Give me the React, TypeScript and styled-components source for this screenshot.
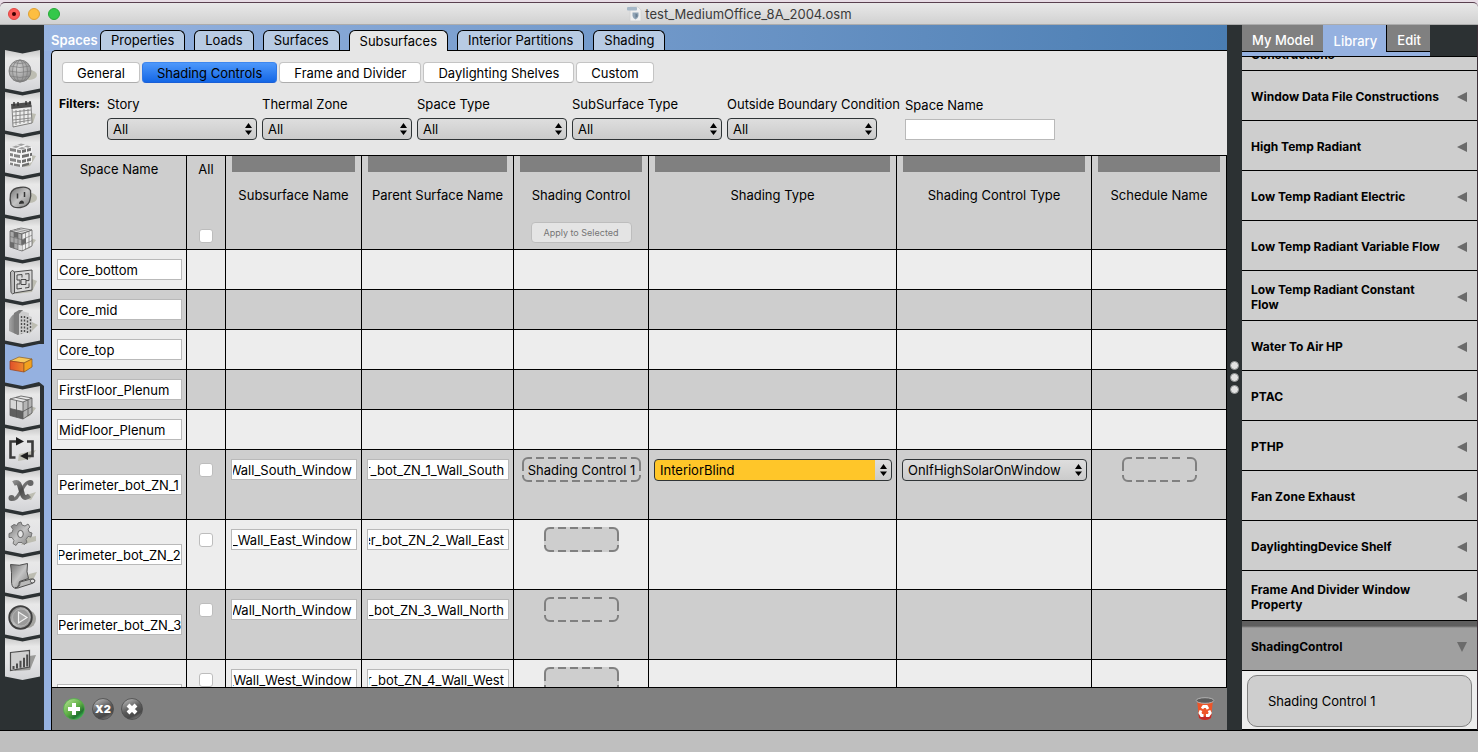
import React from "react";
import styled, { createGlobalStyle, css } from "styled-components";

const colors = {
  dark: "#2c3133",
  line: "#000000",
  blue: "#95b1e0",
  panel: "#e6e6e6",
  cell: "#cecece",
  cellLight: "#ededed",
  grey: "#808080",
};

const GlobalStyle = createGlobalStyle`
  *, *::before, *::after { box-sizing: border-box; }
  body { margin: 0; background: #e8dde6; }
  body, button, input, select {
    font-family: Inter, "Liberation Sans", sans-serif;
    font-size: 13px;
    line-height: 16px;
    color: #000;
  }
  button, input, select { margin: 0; }
`;

const Window = styled.div`
  display: flex;
  flex-direction: column;
  height: 100vh;
  padding-top: 2px;
`;

const TitleBar = styled.header`
  flex: none;
  display: grid;
  grid-template-columns: 1fr auto 1fr;
  align-items: center;
  height: 23px;
  padding: 0 8px;
  border-top: 1px solid #5a4150;
  border-bottom: 1px solid #acacac;
  border-radius: 5px 5px 0 0;
  background: linear-gradient(#e9e9e9, #d1d1d1);
`;

const Lights = styled.div`
  display: flex;
  gap: 8px;
`;

const Light = styled.button<{ $fill: string; $rim: string }>`
  display: grid;
  place-items: center;
  width: 12px;
  height: 12px;
  padding: 0;
  border: 1px solid ${(p) => p.$rim};
  border-radius: 50%;
  background: ${(p) => p.$fill};
`;

const EditedDot = styled.span`
  width: 4px;
  height: 4px;
  border-radius: 50%;
  background: #3d0000;
`;

const Title = styled.h1`
  display: flex;
  align-items: center;
  gap: 3px;
  margin: 0;
  font-size: 13px;
  font-weight: 400;
  color: #3a3a3a;
`;

const Workspace = styled.div`
  flex: 1;
  display: flex;
  min-height: 0;
  border-right: 1px solid #3c3038;
  background: ${colors.dark};
`;

const StatusBar = styled.footer`
  flex: none;
  height: 22px;
  border-top: 1px solid ${colors.line};
  background: #bfbfbf;
`;

const Rail = styled.nav`
  flex: none;
  display: flex;
  flex-direction: column;
  width: 44px;
  padding: 25px 0 0 5px;
`;

const RailButton = styled.button`
  flex: none;
  height: 42px;
  padding: 0;
  border: 0;
  background: none;
  text-align: left;
  svg { display: block; }
`;

const Main = styled.main`
  flex: 1;
  display: flex;
  flex-direction: column;
  min-width: 0;
  padding-left: 7px;
  background: linear-gradient(90deg, #98b4e1, #4a7db2);
  background-color: ${colors.blue};
  background-size: 100% 26px;
  background-repeat: no-repeat;
`;

const TabBar = styled.div`
  flex: none;
  display: flex;
  align-items: flex-end;
  gap: 9px;
  height: 25px;
`;

const Section = styled.h2`
  width: 40px;
  margin: 0;
  font-size: 13px;
  line-height: 20px;
  font-weight: 600;
  color: #fff;
`;

const Tab = styled.button<{ $active?: boolean }>`
  height: 20px;
  padding: 0 10px;
  border: 1px solid ${colors.line};
  border-bottom: 0;
  border-radius: 6px 6px 0 0;
  background: #b8cbe3;
  line-height: 19px;
  ${(p) =>
    p.$active &&
    css`
      z-index: 1;
      height: 21px;
      margin-bottom: -1px;
      background: ${colors.panel};
      line-height: 21px;
    `}
`;

const Panel = styled.section`
  flex: 1;
  display: flex;
  flex-direction: column;
  min-height: 0;
  border-top: 1px solid ${colors.line};
  border-left: 1px solid ${colors.line};
  border-radius: 5px 0 0 0;
  background: ${colors.panel};
`;

const SubTabs = styled.div`
  display: flex;
  gap: 2px;
  padding: 11px 10px 0;
`;

const SubTab = styled.button<{ $active?: boolean }>`
  height: 21px;
  padding: 0 14px;
  border: 1px solid #c4c4c4;
  border-bottom-color: #adadad;
  border-radius: 4px;
  background: #fff;
  line-height: 18px;
  ${(p) =>
    p.$active &&
    css`
      border-color: #3d87ef #2f78e6 #1a5fd6;
      background: linear-gradient(#4d98fb, #1467e6);
    `}
`;

const Filters = styled.div`
  display: flex;
  align-items: flex-end;
  padding: 13px 7px 15px;
`;

const FiltersTitle = styled.strong`
  align-self: flex-start;
  width: 48px;
  font-size: 12px;
  font-weight: 700;
`;

const FilterList = styled.div`
  display: flex;
  align-items: flex-end;
  gap: 5px;
`;

const Filter = styled.div`
  display: flex;
  flex-direction: column;
  gap: 6px;
  min-width: 150px;
`;

const FilterLabel = styled.label`
  white-space: nowrap;
`;

const SelectFrame = styled.div<{ $wide?: boolean }>`
  position: relative;
  width: ${(p) => (p.$wide ? "100%" : "150px")};
  svg {
    position: absolute;
    top: 5px;
    right: 5px;
    pointer-events: none;
  }
`;

const SelectBox = styled.select<{ $marked?: boolean }>`
  display: block;
  appearance: none;
  width: 100%;
  height: 22px;
  padding: 0 20px 0 5px;
  border: 1px solid #2f3436;
  border-radius: 4px;
  background: ${(p) =>
    p.$marked
      ? "linear-gradient(90deg, #ffc629 calc(100% - 16px), transparent calc(100% - 16px)), linear-gradient(#dedede, #cbcbcb)"
      : "linear-gradient(#dedede, #cbcbcb)"};
`;

const TextBox = styled.input<{ $tight?: boolean }>`
  display: block;
  width: 100%;
  height: 21px;
  padding: ${(p) => (p.$tight ? "0 0 0 1px" : "0 4px 0 1px")};
  border: 1px solid #b9b9b9;
  border-radius: 0;
  background: #fff;
`;

const FilterText = styled(TextBox)`
  width: 150px;
`;

const TableArea = styled.div`
  flex: 1;
  min-height: 0;
  overflow: hidden;
  border-top: 1px solid ${colors.line};
  border-bottom: 1px solid ${colors.line};
`;

const Table = styled.table`
  width: 100%;
  table-layout: fixed;
  border-collapse: separate;
  border-spacing: 0;
`;

const Column = styled.col<{ $width?: number }>`
  width: ${(p) => (p.$width ? `${p.$width}px` : "auto")};
`;

const HeadCell = styled.th`
  height: 94px;
  padding: 0;
  border-right: 1px solid ${colors.line};
  border-bottom: 1px solid ${colors.line};
  background: ${colors.cell};
  font-weight: 400;
`;

const HeadBody = styled.div<{ $plain?: boolean }>`
  display: flex;
  flex-direction: column;
  align-items: center;
  height: 93px;
  padding: ${(p) => (p.$plain ? "5px 0 6px" : "0 6px 6px")};
`;

const Grip = styled.div`
  width: 100%;
  height: 16px;
  margin-bottom: 15px;
  background: ${colors.grey};
`;

const ApplyButton = styled.button`
  width: 101px;
  height: 21px;
  margin-top: auto;
  padding: 0;
  border: 1px solid #bdbdbd;
  border-radius: 4px;
  background: #e4e4e4;
  font-size: 9px;
  line-height: 18px;
  color: #757575;
`;

const Check = styled.input`
  display: block;
  appearance: none;
  width: 14px;
  height: 14px;
  border: 1px solid #bdbdbd;
  border-radius: 3px;
  background: #fff;
`;

const HeadCheck = styled(Check)`
  margin-top: auto;
`;

const RowCheck = styled(Check)`
  margin: 4px 0 0 7px;
`;

const Row = styled.tr<{ $height: number; $light: boolean }>`
  height: ${(p) => p.$height}px;
  background: ${(p) => (p.$light ? colors.cellLight : colors.cell)};
`;

const Cell = styled.td<{ $middle?: boolean }>`
  padding: ${(p) => (p.$middle ? "0 4px 0 5px" : "9px 4px 0 5px")};
  border-right: 1px solid ${colors.line};
  border-bottom: 1px solid ${colors.line};
  vertical-align: ${(p) => (p.$middle ? "middle" : "top")};
`;

const DropCell = styled(Cell)`
  padding-top: 7px;
`;

const DropZone = styled.div<{ $width: number }>`
  position: relative;
  display: grid;
  place-items: center;
  width: ${(p) => p.$width}px;
  height: 25px;
  margin: 0 auto;
  border-radius: 5px;
  background: ${colors.cell};
  white-space: nowrap;
  svg {
    position: absolute;
    inset: 0;
  }
`;

const ToolBar = styled.div`
  flex: none;
  display: flex;
  align-items: center;
  gap: 5px;
  height: 42px;
  padding: 0 10px;
  background: ${colors.grey};
`;

const IconButton = styled.button<{ $last?: boolean }>`
  width: 24px;
  height: 24px;
  padding: 0;
  margin-left: ${(p) => (p.$last ? "auto" : "0")};
  border: 0;
  background: none;
  svg { display: block; }
`;

const Splitter = styled.div`
  flex: none;
  display: flex;
  flex-direction: column;
  align-items: center;
  justify-content: center;
  gap: 3px;
  width: 15px;
`;

const SplitterDot = styled.span`
  width: 9px;
  height: 9px;
  border: 1px solid #8e9192;
  border-radius: 50%;
  background: #e2e2e2;
`;

const Side = styled.aside`
  flex: none;
  display: flex;
  flex-direction: column;
  width: 235px;
`;

const SideTabs = styled.div`
  flex: none;
  display: flex;
  align-self: flex-start;
  height: 31px;
  border-bottom: 4px solid ${colors.blue};
`;

const SideTab = styled.button<{ $active?: boolean }>`
  height: 27px;
  padding: 0 9px 0 10px;
  border: solid ${colors.line};
  border-width: 0 0 1px 0;
  background: ${colors.grey};
  font-weight: 500;
  line-height: 30px;
  color: #fff;
  & + & { border-left-width: 1px; }
  ${(p) =>
    p.$active &&
    css`
      border-color: ${colors.blue};
      background: ${colors.blue};
      line-height: 32px;
    `}
`;

const Library = styled.div`
  flex: 1;
  display: flex;
  flex-direction: column;
  justify-content: flex-end;
  min-height: 0;
  overflow: hidden;
  border-top: 1px solid ${colors.line};
  border-bottom: 1px solid ${colors.line};
`;

const LibraryItem = styled.button<{ $open?: boolean }>`
  flex: none;
  display: flex;
  align-items: center;
  justify-content: space-between;
  height: 50px;
  padding: 2px 10px 0 9px;
  border: 0;
  border-bottom: 1px solid ${colors.line};
  background: ${(p) =>
    p.$open
      ? "linear-gradient(#5f5f5f 5px, #828282 6px, #a0a0a0 7px, #a0a0a0)"
      : colors.cell};
  font-size: 12px;
  line-height: 15px;
  font-weight: 700;
  text-align: left;
  white-space: pre;
`;

const LibraryBody = styled.div`
  flex: none;
  padding: 4px 5px 2px;
  background: #ededed;
`;

const LibraryCard = styled.div`
  height: 52px;
  padding-left: 20px;
  border: 1px solid ${colors.grey};
  border-radius: 10px;
  background: ${colors.cell};
  line-height: 50px;
`;

const HiddenDefs = styled.svg`
  position: absolute;
`;

const shadow = "#bdbdb2";

function IconDefs() {
  return (
    <HiddenDefs width="0" height="0" aria-hidden="true">
      <defs>
        <linearGradient id="tile" x1="0" y1="0" x2="0" y2="1">
          <stop offset="0" stopColor="#c9c9c9" />
          <stop offset="0.2" stopColor="#e8e8e8" />
          <stop offset="0.6" stopColor="#e2e2e4" />
          <stop offset="1" stopColor="#d2d3d6" />
        </linearGradient>
        <linearGradient id="steel" x1="0" y1="0" x2="1" y2="1">
          <stop offset="0" stopColor="#6f6f6f" />
          <stop offset="0.5" stopColor="#c4c4c4" />
          <stop offset="1" stopColor="#7d7d7d" />
        </linearGradient>
        <linearGradient id="steelDark" x1="0" y1="0" x2="1" y2="1">
          <stop offset="0" stopColor="#8a8a8a" />
          <stop offset="0.5" stopColor="#4a4a4a" />
          <stop offset="1" stopColor="#777" />
        </linearGradient>
        <linearGradient id="wall" x1="0" y1="0" x2="1" y2="0">
          <stop offset="0" stopColor="#a5a5a5" />
          <stop offset="1" stopColor="#6d6d6d" />
        </linearGradient>
        <radialGradient id="ball" cx="0.4" cy="0.35" r="0.7">
          <stop offset="0" stopColor="#cfcfcf" />
          <stop offset="1" stopColor="#8e8e8e" />
        </radialGradient>
        <linearGradient id="green" x1="0.1" y1="0" x2="0.9" y2="1">
          <stop offset="0" stopColor="#b5e393" />
          <stop offset="0.5" stopColor="#5fae45" />
          <stop offset="0.75" stopColor="#23742f" />
          <stop offset="1" stopColor="#44dd70" />
        </linearGradient>
        <linearGradient id="grey" x1="0.2" y1="0" x2="0.7" y2="1">
          <stop offset="0" stopColor="#b9b9b9" />
          <stop offset="0.5" stopColor="#5c5c5c" />
          <stop offset="0.8" stopColor="#484848" />
          <stop offset="1" stopColor="#808080" />
        </linearGradient>
        <linearGradient id="orangeFace" x1="0" y1="0" x2="1" y2="0">
          <stop offset="0" stopColor="#e0502a" />
          <stop offset="1" stopColor="#ef8a2c" />
        </linearGradient>
      </defs>
    </HiddenDefs>
  );
}

const glyphs: { name: string; art: React.ReactNode }[] = [
  {
    name: "Site",
    art: (
      <g>
        <ellipse cx="24" cy="25" rx="8" ry="5" fill={shadow} />
        <circle cx="15" cy="21" r="11" fill="url(#ball)" />
        <g fill="none" stroke="#7d7d7d" strokeWidth="0.7">
          <circle cx="15" cy="21" r="11" stroke="#6d6d6d" />
          <ellipse cx="15" cy="21" rx="3.500" ry="11" />
          <ellipse cx="15" cy="21" rx="7.500" ry="11" />
          <path d="M4 21q11 3 22 0M5 16q10 3 20 0M8 12.500q7 2 14 0M5 26q10 3 20 0M8 30q7 1.500 14 0" />
        </g>
      </g>
    ),
  },
  {
    name: "Schedules",
    art: (
      <g>
        <path d="M26 21l5 1-3 9-20 4z" fill={shadow} />
        <path d="M7 15l19-2 1 18-19 4z" fill="#ececec" stroke="#666" strokeWidth="0.8" />
        <path d="M6 12l20-2 .5 5-20 2z" fill="#4f4f4f" />
        <path d="M9 10v4M13 10v4M21 9v4M25 9v3" stroke="#333" strokeWidth="1.400" />
        <path d="M8 20l18-2M8 24l18-2M8 28l18-2M8 31l18-3M11 18v15M15 18v14M19 17v14M23 17v14" stroke="#858585" strokeWidth="0.9" fill="none" />
      </g>
    ),
  },
  {
    name: "Constructions",
    art: (
      <g>
        <path d="M26 21l5 1-6 10-6 1z" fill={shadow} />
        <path d="M5 14l10-4 12 3v15l-11 5-12-3z" fill="#f4f4f4" />
        <g fill="#848484">
          <path d="M5 14l6 1v3l-6-1zM12 15.500l4 .7v3l-4-.7zM5 19l3 .5v3L5 22zM9 20l6 1v3l-6-1zM5 24l6 1v3l-6-1zM12 25.500l4 .7v3l-4-.7zM5 28.500l3 .5v2.500l-3-.7zM9 29.500l6 1v2.500l-6-1.200z" />
          <path d="M17 16l4-1v3l-4 1zM22 14.700l4-1v3l-4 1zM17 21l7-1.600v3L17 24zM25 19.300l2-.5v3l-2 .5zM17 26l4-1v3l-4 1zM22 24.700l4-1v3l-4 1zM17 30.500l7-2v2.600l-7 1.900z" fill="#6d6d6d" />
        </g>
        <path d="M7 13l4-1.500 4 1-4 1.500zM12 11l4-1.500 4 1-4 1.400zM13 14.500l4-1.500 4 1-4 1.500zM19 12.500l3-1 4 1-3 1.200z" fill="#a0a0a0" />
      </g>
    ),
  },
  {
    name: "Loads",
    art: (
      <g>
        <ellipse cx="25" cy="22" rx="7" ry="5" fill={shadow} />
        <path d="M5.500 18q2-6 9-6.500 8-1.500 11 3 1 6-1 11-2 5-9 6-7 1-9.500-3-1.500-5-.5-10.500z" fill="url(#steel)" stroke="#454545" strokeWidth="1.300" />
        <path d="M12.500 17.500v5M19.500 16v5" stroke="#333" strokeWidth="1.500" />
        <path d="M14 28q0-3 2.500-3.500 2.500 0 2.500 3z" fill="#333" />
      </g>
    ),
  },
  {
    name: "Space Types",
    art: (
      <g>
        <path d="M26 20l5 2-6 8-8 3z" fill={shadow} />
        <path d="M5 13l11-3 11 2-10 4z" fill="#e0e0e0" stroke="#555" strokeWidth="0.7" />
        <path d="M5 13l12 3v17L5 29z" fill="#a9a9a9" stroke="#555" strokeWidth="0.7" />
        <path d="M17 16l10-4v16l-10 5z" fill="#ededed" stroke="#555" strokeWidth="0.7" />
        <path d="M9 14v5l4 1v-5zM5 24l4 1v5l-4-1z" fill="#6a6a6a" />
        <path d="M17 22l4-2v5l-4 2z" fill="#6a6a6a" />
        <path d="M13 26l4 1v5.500l-4-1z" fill="#dcdcdc" />
        <path d="M9 14v16.500M13 15v16.500M5 18.500l12 3.200 10-4.500M5 24l12 3.200 10-4.500M20.500 14.500v16.700M24 13v16.500M9 12l11 2.500M12 11l11.500 2.300" fill="none" stroke="#666" strokeWidth="0.6" />
      </g>
    ),
  },
  {
    name: "Geometry",
    art: (
      <g>
        <path d="M27 19l5 2-5 11-17 2z" fill={shadow} />
        <path d="M9 12l18-2v20l-18 3z" fill="#d8d8d8" stroke="#4d4d4d" strokeWidth="1" />
        <path d="M5.500 12q2-3 4 0v21q-2 2-3.500-.5z" fill="#bcbcbc" stroke="#4d4d4d" strokeWidth="1" />
        <path d="M12 15l5-.5v3M20 14l4-.4v7h-3M12 15v5h3v4h-3v5l5-.7M20 28l4-.6v-4M16 19.500h5v5h-5z" fill="none" stroke="#4a4a4a" strokeWidth="1" />
      </g>
    ),
  },
  {
    name: "Facility",
    art: (
      <g>
        <path d="M27 20l6 3-9 9z" fill={shadow} />
        <path d="M4 18q3-6 9-8v23l-9-4z" fill="url(#wall)" />
        <path d="M9 11l5-3h4l-4 5v20l-5-2z" fill="#7d7d7d" />
        <path d="M14 12l3-3 7 2v3l3 1v14l-13 4z" fill="#cdcdcd" />
        <path d="M16.500 14v18M19.500 14v17M22.500 15v16M25.500 17v13" stroke="#4d4d4d" strokeWidth="1.400" strokeDasharray="2 1.500" />
      </g>
    ),
  },
  {
    name: "Spaces",
    art: (
      <g>
        <path d="M26 19l2 3-8 6z" fill="#7f97bd" />
        <path d="M5 17l9-4 13 2-8 4z" fill="#f8c95a" stroke="#8a5a22" strokeWidth="0.7" />
        <path d="M5 17l14 2v9L5 25.500z" fill="url(#orangeFace)" stroke="#9a4018" strokeWidth="0.7" />
        <path d="M19 19l8-4v8l-8 5z" fill="#f2a11e" stroke="#8a5a22" strokeWidth="0.7" />
      </g>
    ),
  },
  {
    name: "Thermal Zones",
    art: (
      <g>
        <path d="M26 20l5 2-6 8-8 3z" fill={shadow} />
        <path d="M5 13l11-3 11 2-9 4z" fill="#e8e8e8" />
        <path d="M5 13l13 3v17L5 29.500z" fill="#d6d6d6" />
        <path d="M18 16l9-4v15l-9 6z" fill="#b5b5b5" />
        <path d="M5 22.500l13 3V33L5 29.500z" fill="#5f5f5f" />
        <path d="M5 13l11-3 11 2v15l-9 6-13-3.500zM5 13l13 3v17M18 16l9-4M5 22.500l13 3 9-5M11.500 14.500v16.700M11 11.500l12 2.500v16" fill="none" stroke="#555" strokeWidth="0.8" />
      </g>
    ),
  },
  {
    name: "HVAC Systems",
    art: (
      <g>
        <path d="M14 26l17-4-6 9-12 2z" fill={shadow} />
        <path d="M13 13.500H5.500v16h5M22 13.500h5.500v14.500h-5" fill="none" stroke="#3c3c3c" strokeWidth="2.600" />
        <path d="M11 9l8 4.500-8 4zM23 24v8l-8-4z" fill="#1e1e1e" />
      </g>
    ),
  },
  {
    name: "Output Variables",
    art: (
      <g>
        <path d="M15 27l16-5-5 8z" fill={shadow} />
        <path d="M26 12.500q-4-1.500-7.500 4.500l-5 8q-3.500 6-7.500 3.500" fill="none" stroke="#707070" strokeWidth="3.200" />
        <path d="M8.500 13.500q5-3 6.500 3l2.500 8q2 5.500 7 1" fill="none" stroke="url(#steelDark)" strokeWidth="5" />
        <circle cx="25.500" cy="13" r="3" fill="#666" />
        <circle cx="6.500" cy="28" r="3" fill="#666" />
      </g>
    ),
  },
  {
    name: "Simulation Settings",
    art: (
      <g>
        <path d="M20 26l11-2v5l-15 4z" fill={shadow} />
        <path d="M13 11l3-1 1 3 3 1 3-2 2 3-2 2 1 3 3 1-1 4-3-.5-2 3 1 3-3 2-2-2-4 0-2 3-3-2 1-3-2-3-3 0 0-4 3-1 1-3-2-3 3-2 3 1z" fill="url(#steel)" stroke="#6a6a6a" strokeWidth="0.9" />
        <ellipse cx="15.500" cy="22" rx="2.800" ry="3.600" fill="#e6e6e6" stroke="#555" strokeWidth="0.9" />
      </g>
    ),
  },
  {
    name: "Measures",
    art: (
      <g>
        <path d="M24 20l8-2-5 10-9 3z" fill={shadow} />
        <path d="M5.500 10.500q9 2 17-1-1.500 9 1 15l-9 3q-1 7-5 6.500-3-1-3-7 .5-9-1-16.500z" fill="url(#steel)" stroke="#4d4d4d" strokeWidth="1" />
        <path d="M10 34q5 0 5-6l11-3q3-.5 4 1.500 0 2-3 3l-11 3.500q-3 1.500-6 1z" fill="#b9b9b9" stroke="#4d4d4d" strokeWidth="1" />
        <ellipse cx="27.500" cy="27" rx="2.300" ry="1.800" fill="#e0e0e0" stroke="#4d4d4d" strokeWidth="0.8" />
      </g>
    ),
  },
  {
    name: "Run Simulation",
    art: (
      <g>
        <ellipse cx="23" cy="23" rx="8" ry="9" fill="#a4a4a0" />
        <circle cx="15.500" cy="21.500" r="11.300" fill="url(#steel)" stroke="#3f3f3f" strokeWidth="1.800" />
        <circle cx="16" cy="21.500" r="8.500" fill="#9a9a9a" stroke="#b8b8b8" strokeWidth="0.8" />
        <path d="M13.500 16v11l8.500-5.500z" fill="#aaa" stroke="#f2f2f2" strokeWidth="1.200" />
      </g>
    ),
  },
  {
    name: "Results Summary",
    art: (
      <g>
        <path d="M24 18l7-1-6 15-16 1z" fill="#9a9a98" />
        <path d="M5.500 14.500l19-2v16.500l-19 3.500z" fill="#cfcfcf" stroke="#4b4b4b" strokeWidth="1.200" />
        <path d="M8.500 31v-3M12 30.500v-5M15.500 29.800v-7M19 29.200v-9.500M22.200 28.600v-12" stroke="#4b4b4b" strokeWidth="2" />
      </g>
    ),
  },
];

function RailIcon({ art, active }: { art: React.ReactNode; active: boolean }) {
  return (
    <svg width="39" height="42" viewBox="0 0 39 42" aria-hidden="true">
      {active ? (
        <path d="M0 0l17.500 3.500L34 0h5v42l-5-4-16.500 4L0 38.500z" fill={colors.blue} />
      ) : (
        <path d="M0 0l17.500 3.500L35 0v38.500L17.500 42 0 38.500z" fill="url(#tile)" />
      )}
      {art}
    </svg>
  );
}

function Arrows() {
  return (
    <svg width="7" height="12" viewBox="0 0 7 12" aria-hidden="true">
      <path d="M3.500 0L7 5H0zM3.500 12L7 7.500H0z" fill="#000" />
    </svg>
  );
}

function Dropdown({ id, label, value, marked, wide }: {
  id: string; label?: string; value: string; marked?: boolean; wide?: boolean;
}) {
  return (
    <SelectFrame $wide={wide}>
      <SelectBox id={id} aria-label={label} $marked={marked} defaultValue={value}>
        <option>{value}</option>
      </SelectBox>
      <Arrows />
    </SelectFrame>
  );
}

/* Long names keep their end in view, as after typing. */
function NameBox({ label, value, tight }: { label: string; value: string; tight?: boolean }) {
  const toEnd = (el: HTMLInputElement | null) => {
    if (el) el.scrollLeft = el.scrollWidth;
  };
  return <TextBox ref={toEnd} $tight={tight} aria-label={label} defaultValue={value} />;
}

function Drop({ text, width }: { text?: string; width: number }) {
  const w = width - 1;
  return (
    <DropZone $width={width}>
      <svg width={width} height="25" viewBox={`0 0 ${width} 25`} aria-hidden="true">
        <path
          d={`M1 14V6a5 5 0 0 1 5-5h4M${w} 14V6a5 5 0 0 0-5-5h-4M1 18v1a5 5 0 0 0 5 5h4M${w} 18v1a5 5 0 0 1-5 5h-4`}
          fill="none"
          stroke="#808080"
          strokeWidth="2"
        />
        <path
          d={`M14 1H${w - 13}M14 24H${w - 13}`}
          fill="none"
          stroke="#808080"
          strokeWidth="2"
          strokeDasharray="8 4"
        />
      </svg>
      {text}
    </DropZone>
  );
}

const tabs = ["Properties", "Loads", "Surfaces", "Subsurfaces", "Interior Partitions", "Shading"];
const subTabs = ["General", "Shading Controls", "Frame and Divider", "Daylighting Shelves", "Custom"];
const filters = ["Story", "Thermal Zone", "Space Type", "SubSurface Type", "Outside Boundary Condition"];
const columns: { title: string; width?: number }[] = [
  { title: "Subsurface Name", width: 136 },
  { title: "Parent Surface Name", width: 152 },
  { title: "Shading Control", width: 135 },
  { title: "Shading Type" },
  { title: "Shading Control Type", width: 195 },
  { title: "Schedule Name", width: 135 },
];
const plainSpaces = ["Core_bottom", "Core_mid", "Core_top", "FirstFloor_Plenum", "MidFloor_Plenum"];
const perimeter = [
  { zone: 1, side: "South" },
  { zone: 2, side: "East" },
  { zone: 3, side: "North" },
  { zone: 4, side: "West" },
];
const library = [
  "\nConstructions",
  "Window Data File Constructions",
  "High Temp Radiant",
  "Low Temp Radiant Electric",
  "Low Temp Radiant Variable Flow",
  "Low Temp Radiant Constant\nFlow",
  "Water To Air HP",
  "PTAC",
  "PTHP",
  "Fan Zone Exhaust",
  "DaylightingDevice Shelf",
  "Frame And Divider Window\nProperty",
];

function SubsurfaceTable() {
  return (
    <Table>
      <colgroup>
        <Column $width={135} />
        <Column $width={39} />
        {columns.map((c) => (
          <Column key={c.title} $width={c.width} />
        ))}
      </colgroup>
      <thead>
        <tr>
          <HeadCell>
            <HeadBody $plain>Space Name</HeadBody>
          </HeadCell>
          <HeadCell>
            <HeadBody $plain>
              <label htmlFor="all">All</label>
              <HeadCheck id="all" type="checkbox" />
            </HeadBody>
          </HeadCell>
          {columns.map((c) => (
            <HeadCell key={c.title}>
              <HeadBody>
                <Grip />
                {c.title}
                {c.title === "Shading Control" && <ApplyButton>Apply to Selected</ApplyButton>}
              </HeadBody>
            </HeadCell>
          ))}
        </tr>
      </thead>
      <tbody>
        {plainSpaces.map((name, i) => (
          <Row key={name} $height={40} $light={i % 2 === 0}>
            <Cell $middle>
              <NameBox label="Space name" value={name} tight />
            </Cell>
            <Cell />
            {columns.map((c) => (
              <Cell key={c.title} />
            ))}
          </Row>
        ))}
        {perimeter.map(({ zone, side }, i) => {
          const space = `Perimeter_bot_ZN_${zone}`;
          return (
            <Row key={space} $height={70} $light={i % 2 === 1}>
              <Cell $middle>
                <NameBox label="Space name" value={space} tight />
              </Cell>
              <Cell>
                <RowCheck type="checkbox" aria-label={`Select ${space}`} />
              </Cell>
              <Cell>
                <NameBox label="Subsurface name" value={`${space}_Wall_${side}_Window`} />
              </Cell>
              <Cell>
                <NameBox label="Parent surface name" value={`${space}_Wall_${side}`} />
              </Cell>
              <DropCell>
                {zone === 1 ? <Drop width={119} text="Shading Control 1" /> : <Drop width={75} />}
              </DropCell>
              <Cell>
                {zone === 1 && (
                  <Dropdown id="shading-type" label="Shading type" value="InteriorBlind" marked wide />
                )}
              </Cell>
              <Cell>
                {zone === 1 && (
                  <Dropdown id="control-type" label="Shading control type" value="OnIfHighSolarOnWindow" wide />
                )}
              </Cell>
              <DropCell>{zone === 1 && <Drop width={75} />}</DropCell>
            </Row>
          );
        })}
      </tbody>
    </Table>
  );
}

function RoundIcon({ kind }: { kind: "add" | "copy" | "remove" }) {
  return (
    <svg width="24" height="24" viewBox="0 0 24 24" aria-hidden="true">
      <circle cx="12" cy="12" r="10.500" fill={kind === "add" ? "url(#green)" : "url(#grey)"} stroke={kind === "add" ? "#4fae4a" : "#4a4a4a"} strokeWidth="0.8" />
      {kind === "add" && <path d="M12 6v12M6 12h12" stroke="#fff" strokeWidth="4" strokeLinejoin="round" />}
      {kind === "copy" && (
        <text x="12" y="16" textAnchor="middle" fontSize="11" fontWeight="900" fill="#fff">X2</text>
      )}
      {kind === "remove" && <path d="M8 8l8 8M16 8l-8 8" stroke="#fff" strokeWidth="4" />}
    </svg>
  );
}

function Trash() {
  return (
    <svg width="24" height="24" viewBox="0 0 24 24" aria-hidden="true">
      <path d="M4 3l2 18q6 4 12 0l2-18z" fill="#ee5528" />
      <path d="M6 21q6 4 12 0l.5-4q-6 5-13 0z" fill="#c42a26" />
      <ellipse cx="12" cy="3.500" rx="8.800" ry="2.800" fill="#5b5b5b" stroke="#b2b2b2" strokeWidth="1" />
      <g fill="none" stroke="#fff" strokeWidth="2.800">
        <path d="M9 11.500l1.500-2h3l1.500 2.500" />
        <path d="M8 13.500l-1 2.500 1.500 2.500h2" />
        <path d="M16 13.500l1.200 2.500-1.700 2.500h-2.500" />
      </g>
    </svg>
  );
}

function DocIcon() {
  return (
    <svg width="16" height="16" viewBox="0 0 16 16" aria-hidden="true">
      <path d="M4 1h8l3 3v11H4z" fill="#f0f0f0" stroke="#d2d2d2" strokeWidth="0.800" />
      <rect x="1" y="1" width="10" height="3.500" rx="1" fill="#a6b8c8" />
      <path d="M6.500 6.500h6v3.500q-.5 2.500-3 3.500-2.500-1-3-3.500z" fill="#8fa3b5" />
      <path d="M9.500 7.500l2 1v2l-2 1.500z" fill="#6b7f92" />
    </svg>
  );
}

export default function App() {
  return (
    <Window>
      <GlobalStyle />
      <IconDefs />
      <TitleBar>
        <Lights>
          <Light $fill="#fc5b57" $rim="#df4744" aria-label="Close">
            <EditedDot />
          </Light>
          <Light $fill="#fdbe41" $rim="#dfa033" aria-label="Minimize" />
          <Light $fill="#34c84a" $rim="#27aa35" aria-label="Zoom" />
        </Lights>
        <Title>
          <DocIcon />
          test_MediumOffice_8A_2004.osm
        </Title>
      </TitleBar>
      <Workspace>
        <Rail aria-label="Sections">
          {glyphs.map((g) => (
            <RailButton key={g.name} aria-label={g.name}>
              <RailIcon art={g.art} active={g.name === "Spaces"} />
            </RailButton>
          ))}
        </Rail>
        <Main>
          <TabBar>
            <Section>Spaces</Section>
            {tabs.map((t) => (
              <Tab key={t} $active={t === "Subsurfaces"}>{t}</Tab>
            ))}
          </TabBar>
          <Panel>
            <SubTabs>
              {subTabs.map((t) => (
                <SubTab key={t} $active={t === "Shading Controls"}>{t}</SubTab>
              ))}
            </SubTabs>
            <Filters>
              <FiltersTitle>Filters:</FiltersTitle>
              <FilterList>
                {filters.map((f) => (
                  <Filter key={f}>
                    <FilterLabel htmlFor={f}>{f}</FilterLabel>
                    <Dropdown id={f} value="All" />
                  </Filter>
                ))}
                <Filter>
                  <FilterLabel htmlFor="space-name">Space Name</FilterLabel>
                  <FilterText id="space-name" type="text" />
                </Filter>
              </FilterList>
            </Filters>
            <TableArea>
              <SubsurfaceTable />
            </TableArea>
            <ToolBar>
              <IconButton aria-label="Add"><RoundIcon kind="add" /></IconButton>
              <IconButton aria-label="Duplicate"><RoundIcon kind="copy" /></IconButton>
              <IconButton aria-label="Remove"><RoundIcon kind="remove" /></IconButton>
              <IconButton aria-label="Purge unused" $last><Trash /></IconButton>
            </ToolBar>
          </Panel>
        </Main>
        <Splitter>
          <SplitterDot />
          <SplitterDot />
          <SplitterDot />
        </Splitter>
        <Side>
          <SideTabs>
            <SideTab>My Model</SideTab>
            <SideTab $active>Library</SideTab>
            <SideTab>Edit</SideTab>
          </SideTabs>
          <Library>
            {library.map((l) => (
              <LibraryItem key={l}>
                {l}
                <svg width="10" height="10" viewBox="0 0 10 10" aria-hidden="true">
                  <path d="M10 0v10L0 5z" fill="#6b6b6b" />
                </svg>
              </LibraryItem>
            ))}
            <LibraryItem $open>
              ShadingControl
              <svg width="10" height="10" viewBox="0 0 10 10" aria-hidden="true">
                <path d="M0 0h10L5 10z" fill="#6b6b6b" />
              </svg>
            </LibraryItem>
            <LibraryBody>
              <LibraryCard>Shading Control 1</LibraryCard>
            </LibraryBody>
          </Library>
        </Side>
      </Workspace>
      <StatusBar />
    </Window>
  );
}
